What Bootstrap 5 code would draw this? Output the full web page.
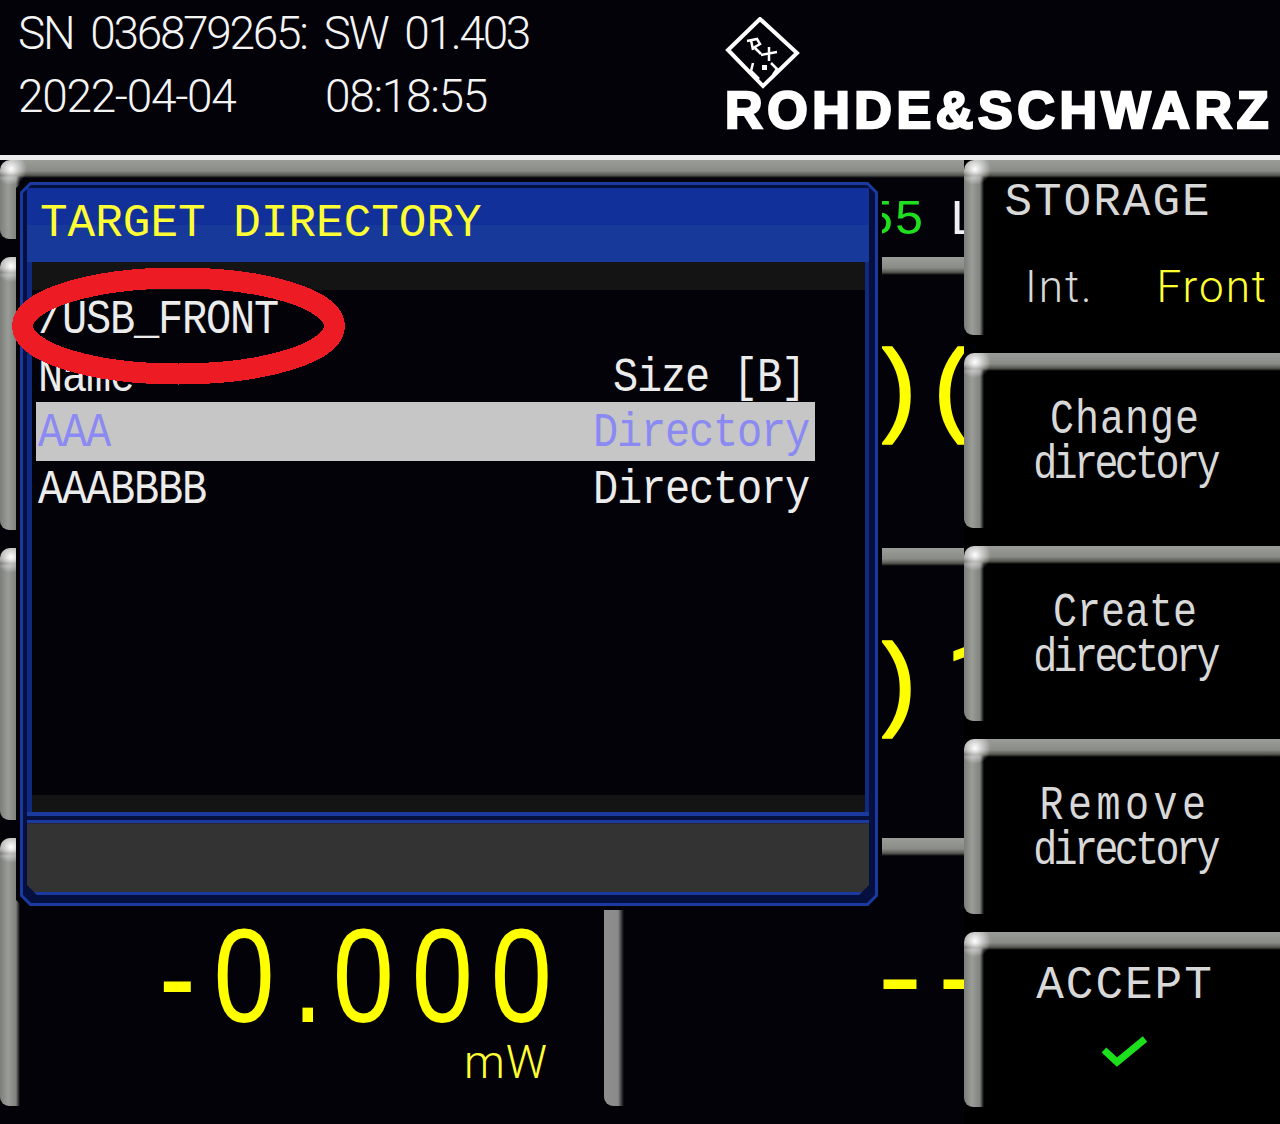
<!DOCTYPE html>
<html lang="en">
<head>
    <meta charset="UTF-8">
    <title>Rohde &amp; Schwarz - Target directory</title>
    <link href="https://cdn.jsdelivr.net/npm/bootstrap@5.3.2/dist/css/bootstrap.min.css" rel="stylesheet">
    <style>
        html, body { background: #020208; }
        body { width: 1280px; height: 1124px; overflow: hidden; position: relative; color: #e8e8e8; font-family: "Liberation Mono", monospace; }

        /* header */
        .top-head { height: 155px; padding: 2px 0 0 18px; }
        .sn-line { font: 300 46px/63px Roboto, "Liberation Sans", sans-serif; letter-spacing: -2.3px; word-spacing: 8px; white-space: pre; color: #f4f4f4; }
        .sn-date { letter-spacing: -1.3px; }
        .logo-box { width: 555px; padding-top: 15px; }
        .logo-word { font: 700 52px/40px "Liberation Sans", sans-serif; letter-spacing: 4.6px; color: #fff; -webkit-text-stroke: 2.5px #fff; white-space: nowrap; margin-top: -3px; }

        .screen { height: 969px; border-top: 5px solid #ececec; }

        /* grey bezel: a bar on top and one on the left */
        .bezel {
            background:
                radial-gradient(circle at 11px 9px, #fff 0, rgba(255,255,255,0) 16px) no-repeat,
                linear-gradient(to bottom, #9a9c98 0, #8a8c88 60%, #55564f 85%, rgba(0,0,0,0) 100%) top left / 100% 18px no-repeat,
                linear-gradient(to right, #7c7e7a 0, #9a9c98 40%, #80827e 80%, rgba(0,0,0,0) 100%) top left / 20px 100% no-repeat;
            border-radius: 10px 0 0 9px;
        }
        .meas-col { width: 964px; }
        .meas-row { padding: 18px 0 0 20px; }
        .row-a { height: 97px; }
        .row-b { height: 291px; }
        .row-c { height: 290px; }
        .row-d { height: 272px; }
        .meas-wrap { padding-bottom: 18px; }
        .row-d.meas-wrap { padding-bottom: 4px; }
        .meas-inner { height: 100%; }
        .cell-left { width: 584px; }
        .cell-right { width: 360px; overflow: hidden; }
        .cell-right.bezel { border-radius: 0 0 0 9px; background: linear-gradient(to right, #8e8e8e 0, #8a8a8a 70%, rgba(0,0,0,0) 100%) top left / 20px 100% no-repeat; }

        .big-read { display: inline-block; color: #ffff00; font: 134px/94px "Liberation Sans", sans-serif; letter-spacing: 21.8px; white-space: nowrap; margin: 73px 0 0 139px; transform: scaleX(.82); transform-origin: left top; }
        .big-read .dot-narrow { letter-spacing: 12px; }
        .unit-read { color: #ffff33; font: 300 46px/40px Roboto, "Liberation Sans", sans-serif; letter-spacing: 1px; text-align: right; padding: 12px 56px 0 0; }
        .paren-read { color: #ffff00; font-size: 104px; line-height: 104px; white-space: nowrap; -webkit-text-stroke: 1.5px #ffff00; }
        .paren-read .one-digit { font-family: Roboto, "Liberation Sans", sans-serif; }
        .read-b { padding: 67px 0 0 261px; letter-spacing: -5px; }
        .read-c { padding: 63px 0 0 261px; letter-spacing: 18px; }
        .read-a { color: #1ee01e; font-size: 50px; line-height: 50px; white-space: nowrap; padding: 18px 0 0 844px; }
        .read-a b { font-weight: 400; color: #f0f0f0; margin-left: 25px; }
        .dash-read { color: #ffff00; font-size: 120px; line-height: 94px; letter-spacing: -12px; padding: 81px 0 0 260px; white-space: nowrap; }

        /* softkeys */
        .key-col { width: 316px; background: #000; }
        .soft-key { height: 175px; margin-bottom: 18px; padding: 18px 12px 0 18px; background-color: #000; color: #d8d8d8; }
        .key-label { font-size: 40px; line-height: 45px; text-align: center; white-space: nowrap; }
        .key-label span { display: inline-block; transform: scaleY(1.2); }
        .key-two { padding-top: 27px; }
        .key-title { font-size: 46px; line-height: 44px; letter-spacing: 2px; padding-top: 3px; }
        .key-left { padding-right: 34px; }
        .key-low { padding-top: 14px; }
        .key-opts { padding: 40px 0 0 43px; font: 300 44px/44px Roboto, "Liberation Sans", sans-serif; letter-spacing: 2px; }
        .key-opts span { color: #ffff33; }
        .key-check { width: 50px; height: 40px; margin-top: 22px; }
        .word-dir { letter-spacing: -3.6px; }
        .word-change { letter-spacing: 1px; }
        .word-remove { letter-spacing: 4.5px; }

        /* dialog over the measurements */
        .dlg-box {
            position: absolute; left: 16px; top: 178px; width: 866px; height: 732px; background: #020208;
            padding: 4px; clip-path: polygon(10px 0, calc(100% - 10px) 0, 100% 10px, 100% calc(100% - 10px), calc(100% - 10px) 100%, 10px 100%, 0 calc(100% - 10px), 0 10px);
        }
        .dlg-line { position: absolute; left: 0; top: 0; }
        .dlg-frame { height: 100%; padding: 6px 9px 11px 7px; background: #06103e; clip-path: polygon(10px 0, calc(100% - 10px) 0, 100% 10px, 100% calc(100% - 10px), calc(100% - 10px) 100%, 10px 100%, 0 calc(100% - 10px), 0 10px); }
        .dlg-title { height: 74px; padding: 14px 0 0 13px; background: linear-gradient(to bottom, #12309a 0, #12309a 50%, #16399a 50%, #16399a 100%); color: #ffff33; font-size: 46px; line-height: 44px; white-space: nowrap; }
        .dlg-body { height: 553px; background: #020208; border-left: 5px solid #0f2a80; border-right: 4px solid #0f2a80; }
        .dlg-strip { height: 28px; background: #141414; }
        .dlg-strip-low { height: 17px; background: #141414; margin-top: auto; }
        .file-row { font: 42px/57px "Liberation Mono", monospace; letter-spacing: -1.2px; white-space: nowrap; padding: 0 60px 0 6px; color: #ececec; }
        .file-row span { display: inline-block; transform: scaleY(1.14); }
        .path-row { height: 57px; line-height: 60px; margin-bottom: 2px; }
        .head-row { height: 53px; line-height: 58px; }
        .file-sel { background: #c6c6c6; color: #8a8af2; margin: 0 50px 0 4px; padding: 0 6px 0 2px; height: 59px; line-height: 62px; }
        .file-plain { height: 56px; line-height: 58px; padding-right: 56px; }
        .dlg-rule { height: 11px; border-top: 4px solid #1a3aa0; border-bottom: 3px solid #1a3aa0; background: #06103e; }
        .dlg-foot { height: 72px; background: #333; border-bottom: 3px solid #1a3aa0; clip-path: polygon(0 0, 100% 0, 100% calc(100% - 10px), calc(100% - 10px) 100%, 10px 100%, 0 calc(100% - 10px)); }

        .red-ring { position: absolute; left: 0; top: 260px; }
        .rs-mark { display: block; }
    </style>
</head>
<body>
    <div class="top-head d-flex justify-content-between">
        <div>
            <div class="sn-line">SN 036879265: SW 01.403</div>
            <div class="sn-line sn-date">2022-04-04     08:18:55</div>
        </div>
        <div class="logo-box">
            <svg class="rs-mark" width="76" height="76" viewBox="0 0 76 76">
                <path d="M35 2 72 36 38 69 3 33Z" fill="none" stroke="#fff" stroke-width="4"/>
                <path d="M22 24 32 22 35 27 28 31M26 23l2 10M30 31l6 6M36 38 52 35M44 30v14M28 46l-2 8 8 8M46 46l6 6-4 6" fill="none" stroke="#fff" stroke-width="2.500"/>
                <rect x="37" y="48" width="5" height="5" fill="#fff"/>
            </svg>
            <div class="logo-word">ROHDE&amp;SCHWARZ</div>
        </div>
    </div>

    <div class="screen d-flex">
        <div class="meas-col d-flex flex-column">
            <div class="meas-wrap row-a"><div class="bezel meas-row meas-inner"><div class="read-a">55<b>L</b></div></div></div>
            <div class="meas-wrap row-b"><div class="bezel meas-row meas-inner d-flex">
                <div class="cell-left"></div>
                <div class="cell-right"><div class="paren-read read-b">)(</div></div>
            </div></div>
            <div class="meas-wrap row-c"><div class="bezel meas-row meas-inner d-flex">
                <div class="cell-left"></div>
                <div class="cell-right"><div class="paren-read read-c">)<span class="one-digit">1</span></div></div>
            </div></div>
            <div class="meas-wrap row-d"><div class="bezel meas-row meas-inner d-flex">
                <div class="cell-left">
                    <div class="big-read">-0<span class="dot-narrow">.</span>000</div>
                    <div class="unit-read">mW</div>
                </div>
                <div class="cell-right bezel"><div class="dash-read">--</div></div>
            </div></div>
        </div>

        <div class="key-col">
            <div class="soft-key bezel">
                <div class="key-label key-title key-left">STORAGE</div>
                <div class="key-opts d-flex justify-content-between"><div>Int.</div><span>Front</span></div>
            </div>
            <div class="soft-key bezel"><div class="key-label key-two"><span class="word-change">Change</span><br><span class="word-dir">directory</span></div></div>
            <div class="soft-key bezel"><div class="key-label key-two"><span>Create</span><br><span class="word-dir">directory</span></div></div>
            <div class="soft-key bezel"><div class="key-label key-two"><span class="word-remove">Remove</span><br><span class="word-dir">directory</span></div></div>
            <div class="soft-key bezel">
                <div class="key-label key-title key-low">ACCEPT</div>
                <div class="text-center">
                    <svg class="key-check" viewBox="0 0 50 40"><path d="M4 20 17 32 45 9" fill="none" stroke="#1be01b" stroke-width="7"/></svg>
                </div>
            </div>
        </div>
    </div>

    <div class="dlg-box">
        <div class="dlg-frame d-flex flex-column">
            <div class="dlg-title">TARGET DIRECTORY</div>
            <div class="dlg-body d-flex flex-column">
                <div class="dlg-strip"></div>
                <div class="file-row path-row"><span>/USB_FRONT</span></div>
                <div class="file-row head-row d-flex justify-content-between"><span>Name</span><span>Size [B]</span></div>
                <div class="file-row file-sel d-flex justify-content-between"><span>AAA</span><span>Directory</span></div>
                <div class="file-row file-plain d-flex justify-content-between"><span>AAABBBB</span><span>Directory</span></div>
                <div class="dlg-strip-low"></div>
            </div>
            <div class="dlg-rule"></div>
            <div class="dlg-foot"></div>
        </div>
        <svg class="dlg-line" width="866" height="732" viewBox="0 0 866 732">
            <path d="M14.500 5.500H851.500L860.500 14.500V717.500L851.500 726.500H14.500L5.500 717.500V14.500Z" fill="none" stroke="#1a3aa0" stroke-width="3"/>
        </svg>
    </div>

    <svg class="red-ring" width="360" height="135" viewBox="0 0 360 135" shape-rendering="crispEdges">
        <ellipse cx="178.5" cy="66" rx="156" ry="48" fill="none" stroke="#ed1c24" stroke-width="21"/>
    </svg>

    <script src="https://cdn.jsdelivr.net/npm/bootstrap@5.3.2/dist/js/bootstrap.bundle.min.js"></script>
</body>
</html>
